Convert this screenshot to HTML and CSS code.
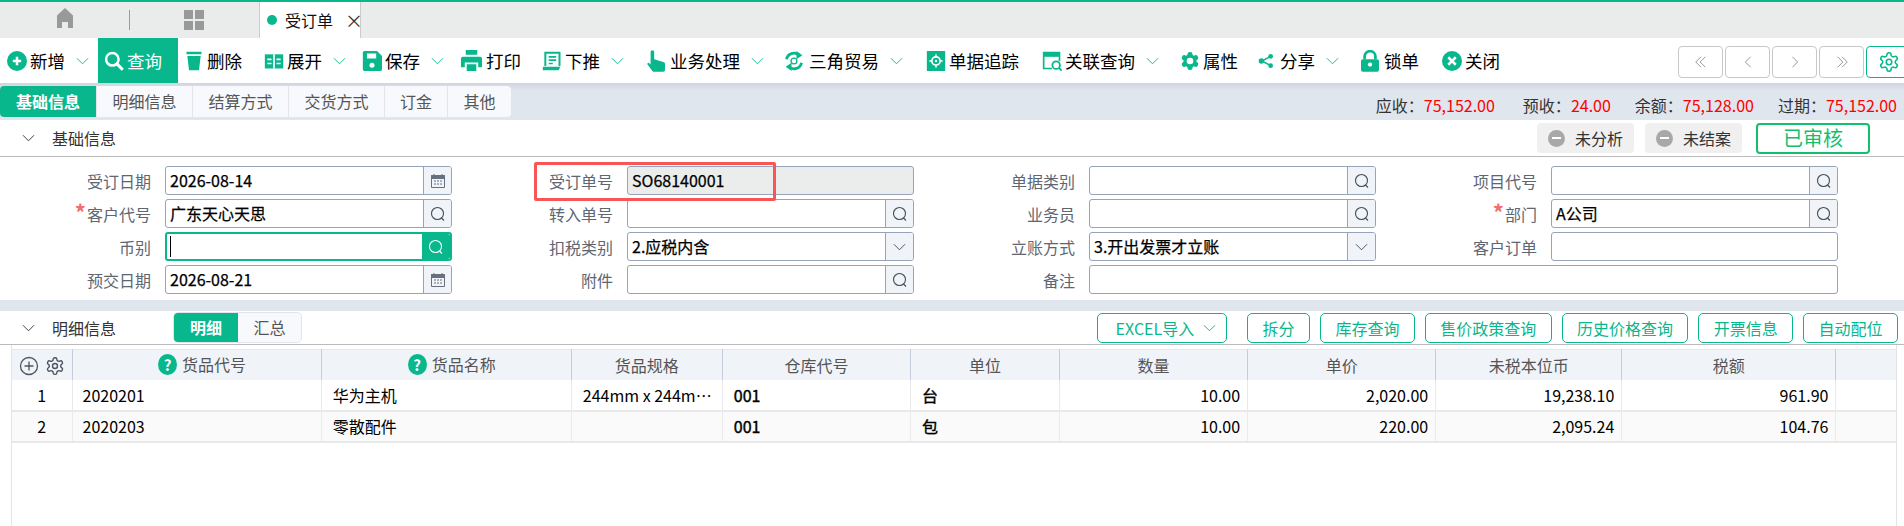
FILE: index.html
```html
<!DOCTYPE html>
<html lang="zh-CN">
<head>
    <meta charset="UTF-8">
    <title>受订单</title>
    <link rel="stylesheet" href="styles.css">
</head>
<body>
    <!-- 图标 -->
    <svg class="sprite" xmlns="http://www.w3.org/2000/svg">
        <symbol id="i-chev" viewBox="0 0 14 8"><path d="M1 1l6 6 6-6" fill="none" stroke="currentColor" stroke-width="1"/></symbol>
        <symbol id="i-add" viewBox="0 0 24 24"><circle cx="12" cy="12" r="12" fill="#09b78c"/><path d="M12 7v10M7 12h10" stroke="#fff" stroke-width="3"/></symbol>
        <symbol id="i-find" viewBox="0 0 24 24"><circle cx="10" cy="10" r="7.5" fill="none" stroke="#fff" stroke-width="3"/><path d="M15.5 15.5l7 7" stroke="#fff" stroke-width="3.6"/></symbol>
        <symbol id="i-trash" viewBox="0 0 24 24"><path d="M3 1h18v3H3zM4 6h16l-2 17H6z" fill="#09b78c"/></symbol>
        <symbol id="i-book" viewBox="0 0 24 24"><path d="M1 4h22v17H1z" fill="#09b78c"/><path d="M12 4v17M4 10h5M15 10h5M4 15h5M15 15h5" stroke="#fff" stroke-width="2"/></symbol>
        <symbol id="i-save" viewBox="0 0 24 24"><path d="M3 0h15l6 6v16a2 2 0 0 1-2 2H3a2 2 0 0 1-2-2V2a2 2 0 0 1 2-2z" fill="#09b78c"/><path d="M6 3h11v6H6z" fill="#fff"/><circle cx="12" cy="17" r="3" fill="#fff"/></symbol>
        <symbol id="i-print" viewBox="0 0 24 24"><path d="M6 1h12v5H6zM3 8h18a2 2 0 0 1 2 2v9h-4v-5H5v5H1v-9a2 2 0 0 1 2-2zM7 16h10v7H7z" fill="#09b78c"/></symbol>
        <symbol id="i-push" viewBox="0 0 24 24"><path d="M4 18V2h17v16" fill="none" stroke="#09b78c" stroke-width="2.4"/><path d="M8 7h9M8 11h9M8 15h5" stroke="#09b78c" stroke-width="2"/><path d="M1 19h21l-2 4H1z" fill="#09b78c"/></symbol>
        <symbol id="i-hand" viewBox="2 0 20 24"><path d="M8 0a2 2 0 0 1 2 2v8l10 3a2 2 0 0 1 2 2v7a2 2 0 0 1-2 2H10a2 2 0 0 1-2-1l-6-8 2-1 2 2V2a2 2 0 0 1 2-2z" fill="#09b78c"/></symbol>
        <symbol id="i-swap" viewBox="0 0 24 24"><path d="M3 10a9 9 0 0 1 15-5M21 14a9 9 0 0 1-15 5" fill="none" stroke="#09b78c" stroke-width="3.4"/><path d="M15 0l7 5-7 5zM9 14l-7 5 7 5z" fill="#09b78c"/><circle cx="12" cy="12" r="3.5" fill="none" stroke="#09b78c" stroke-width="1.6"/></symbol>
        <symbol id="i-track" viewBox="0 0 24 24"><path d="M1 0h22v24H1z" fill="#09b78c"/><circle cx="12" cy="12" r="5" fill="none" stroke="#fff" stroke-width="2"/><circle cx="12" cy="12" r="1.5" fill="#fff"/><path d="M12 4v3M12 17v3M4 12h3M17 12h3" stroke="#fff" stroke-width="1.6"/></symbol>
        <symbol id="i-link" viewBox="0 0 24 24"><path d="M12 21H2V2h19v10" fill="none" stroke="#09b78c" stroke-width="2"/><path d="M2 2h19v5H2z" fill="#09b78c"/><circle cx="17" cy="17" r="4.5" fill="none" stroke="#09b78c" stroke-width="2.2"/><path d="M20 20l3.5 3.5" stroke="#09b78c" stroke-width="2.2"/></symbol>
        <symbol id="i-gear" viewBox="0 0 24 24"><path d="M12.22 2h-.44a2 2 0 0 0-2 2v.18a2 2 0 0 1-1 1.73l-.43.25a2 2 0 0 1-2 0l-.15-.08a2 2 0 0 0-2.73.73l-.22.38a2 2 0 0 0 .73 2.73l.15.1a2 2 0 0 1 1 1.72v.51a2 2 0 0 1-1 1.74l-.15.09a2 2 0 0 0-.73 2.73l.22.38a2 2 0 0 0 2.73.73l.15-.08a2 2 0 0 1 2 0l.43.25a2 2 0 0 1 1 1.73V20a2 2 0 0 0 2 2h.44a2 2 0 0 0 2-2v-.18a2 2 0 0 1 1-1.73l.43-.25a2 2 0 0 1 2 0l.15.08a2 2 0 0 0 2.73-.73l.22-.39a2 2 0 0 0-.73-2.73l-.15-.08a2 2 0 0 1-1-1.74v-.5a2 2 0 0 1 1-1.74l.15-.09a2 2 0 0 0 .73-2.73l-.22-.38a2 2 0 0 0-2.73-.73l-.15.08a2 2 0 0 1-2 0l-.43-.25a2 2 0 0 1-1-1.73V4a2 2 0 0 0-2-2z" fill="none" stroke="currentColor" stroke-width="1.7"/><circle cx="12" cy="12" r="3" fill="none" stroke="currentColor" stroke-width="1.7"/></symbol>
        <symbol id="i-prop" viewBox="0 0 24 24"><path d="M12.22 2h-.44a2 2 0 0 0-2 2v.18a2 2 0 0 1-1 1.73l-.43.25a2 2 0 0 1-2 0l-.15-.08a2 2 0 0 0-2.73.73l-.22.38a2 2 0 0 0 .73 2.73l.15.1a2 2 0 0 1 1 1.72v.51a2 2 0 0 1-1 1.74l-.15.09a2 2 0 0 0-.73 2.73l.22.38a2 2 0 0 0 2.73.73l.15-.08a2 2 0 0 1 2 0l.43.25a2 2 0 0 1 1 1.73V20a2 2 0 0 0 2 2h.44a2 2 0 0 0 2-2v-.18a2 2 0 0 1 1-1.73l.43-.25a2 2 0 0 1 2 0l.15.08a2 2 0 0 0 2.73-.73l.22-.39a2 2 0 0 0-.73-2.73l-.15-.08a2 2 0 0 1-1-1.74v-.5a2 2 0 0 1 1-1.74l.15-.09a2 2 0 0 0 .73-2.73l-.22-.38a2 2 0 0 0-2.73-.73l-.15.08a2 2 0 0 1-2 0l-.43-.25a2 2 0 0 1-1-1.73V4a2 2 0 0 0-2-2z" fill="#09b78c" stroke="#09b78c" stroke-width="1.7"/><circle cx="12" cy="12" r="4" fill="#fff"/></symbol>
        <symbol id="i-share" viewBox="0 0 24 24"><path d="M6 12l13-7M6 12l13 7" stroke="#09b78c" stroke-width="2.2"/><circle cx="5" cy="12" r="4" fill="#09b78c"/><circle cx="19" cy="5" r="3.5" fill="#09b78c"/><circle cx="19" cy="19" r="3.5" fill="#09b78c"/></symbol>
        <symbol id="i-lock" viewBox="2 0 20 24"><path d="M6 10V7a6 6 0 0 1 12 0v3" fill="none" stroke="#09b78c" stroke-width="3"/><path d="M4 10h16a2 2 0 0 1 2 2v10a2 2 0 0 1-2 2H4a2 2 0 0 1-2-2V12a2 2 0 0 1 2-2z" fill="#09b78c"/><circle cx="12" cy="16" r="2.4" fill="#fff"/></symbol>
        <symbol id="i-close" viewBox="0 0 24 24"><circle cx="12" cy="12" r="12" fill="#09b78c"/><path d="M7.500 7.500l9 9M16.500 7.500l-9 9" stroke="#fff" stroke-width="3"/></symbol>
        <symbol id="i-cal" viewBox="0 0 16 16"><path d="M1.500 2.500h13v12h-13z" fill="none" stroke="#66707e"/><path d="M1.500 2.500h13v3h-13zM4 1v2M12 1v2" fill="#66707e" stroke="#66707e"/><path d="M4 8h2M7 8h2M10 8h2M4 11h2M7 11h2M10 11h2" stroke="#66707e"/></symbol>
        <symbol id="i-mag" viewBox="0 0 16 16"><circle cx="7.500" cy="7.500" r="6" fill="none" stroke="currentColor" stroke-width="1.100"/><path d="M11.500 12l2.500 2.500" stroke="currentColor" stroke-width="1.100"/></symbol>
    </svg>

    <!-- 页签栏 -->
    <div class="tabbar">
        <div class="tab-icon">
            <svg class="tab-svg" viewBox="0 0 20 20"><path d="M10 0l8 7.500V20h-5v-6H7v6H2V7.500z" fill="#999"/></svg>
        </div>
        <div class="tab-icon tab-divided">
            <svg class="tab-svg" viewBox="0 0 20 20"><path d="M0 0h9v9H0zM11 0h9v9h-9zM0 11h9v9H0zM11 11h9v9h-9z" fill="#999"/></svg>
        </div>
        <div class="tab-active">
            <span class="tab-dot"></span>
            <span class="tab-name">受订单</span>
            <span class="tab-close">×</span>
        </div>
    </div>

    <!-- 工具栏 -->
    <div class="toolbar">
        <div class="tools">
            <div class="tool tool-first"><svg class="ico"><use href="#i-add"/></svg>新增<svg class="chev"><use href="#i-chev"/></svg></div>
            <div class="tool tool-on"><svg class="ico"><use href="#i-find"/></svg>查询</div>
            <div class="tool"><svg class="ico"><use href="#i-trash"/></svg>删除</div>
            <div class="tool tool-tight"><svg class="ico"><use href="#i-book"/></svg>展开<svg class="chev"><use href="#i-chev"/></svg></div>
            <div class="tool tool-tight"><svg class="ico"><use href="#i-save"/></svg>保存<svg class="chev"><use href="#i-chev"/></svg></div>
            <div class="tool tool-near"><svg class="ico ico-print"><use href="#i-print"/></svg>打印</div>
            <div class="tool tool-far"><svg class="ico"><use href="#i-push"/></svg>下推<svg class="chev"><use href="#i-chev"/></svg></div>
            <div class="tool tool-less"><svg class="ico ico-hand"><use href="#i-hand"/></svg>业务处理<svg class="chev"><use href="#i-chev"/></svg></div>
            <div class="tool tool-far"><svg class="ico ico-swap"><use href="#i-swap"/></svg>三角贸易<svg class="chev"><use href="#i-chev"/></svg></div>
            <div class="tool tool-far"><svg class="ico"><use href="#i-track"/></svg>单据追踪</div>
            <div class="tool tool-near"><svg class="ico"><use href="#i-link"/></svg>关联查询<svg class="chev"><use href="#i-chev"/></svg></div>
            <div class="tool tool-less"><svg class="ico"><use href="#i-prop"/></svg>属性</div>
            <div class="tool"><svg class="ico ico-share"><use href="#i-share"/></svg>分享<svg class="chev"><use href="#i-chev"/></svg></div>
            <div class="tool tool-far"><svg class="ico ico-lock"><use href="#i-lock"/></svg>锁单</div>
            <div class="tool"><svg class="ico"><use href="#i-close"/></svg>关闭</div>
        </div>
        <div class="pager">
            <div class="page-btn"><svg viewBox="0 0 16 16" class="page-ico"><path d="M8 2L2 8l6 6M13 2L7 8l6 6" fill="none" stroke="currentColor"/></svg></div>
            <div class="page-btn"><svg viewBox="0 0 16 16" class="page-ico"><path d="M11 2L5 8l6 6" fill="none" stroke="currentColor"/></svg></div>
            <div class="page-btn"><svg viewBox="0 0 16 16" class="page-ico"><path d="M5 2l6 6-6 6" fill="none" stroke="currentColor"/></svg></div>
            <div class="page-btn"><svg viewBox="0 0 16 16" class="page-ico"><path d="M3 2l6 6-6 6M8 2l6 6-6 6" fill="none" stroke="currentColor"/></svg></div>
            <div class="page-btn page-set"><svg class="page-gear"><use href="#i-gear"/></svg></div>
        </div>
    </div>

    <!-- 单据页签和金额 -->
    <div class="strip">
        <div class="subtabs">
            <div class="subtab subtab-on">基础信息</div>
            <div class="subtab">明细信息</div>
            <div class="subtab">结算方式</div>
            <div class="subtab">交货方式</div>
            <div class="subtab subtab-short">订金</div>
            <div class="subtab subtab-short">其他</div>
        </div>
        <div class="totals">
            <span class="total">应收：<b>75,152.00</b></span>
            <span class="total">预收：<b>24.00</b></span>
            <span class="total">余额：<b>75,128.00</b></span>
            <span class="total">过期：<b>75,152.00</b></span>
        </div>
    </div>

    <!-- 基础信息 -->
    <div class="section-head">
        <svg class="fold"><use href="#i-chev"/></svg>
        <span class="section-title">基础信息</span>
        <div class="statuses">
            <div class="pill"><span class="pill-minus"></span>未分析</div>
            <div class="pill"><span class="pill-minus"></span>未结案</div>
            <div class="audited">已审核</div>
        </div>
    </div>

    <div class="form">
        <label class="lbl">受订日期</label>
        <div class="inp"><span class="val">2026-08-14</span><span class="addon"><svg class="add-ico"><use href="#i-cal"/></svg></span></div>
        <label class="lbl">受订单号</label>
        <div class="inp inp-ro"><span class="val">SO68140001</span></div>
        <label class="lbl">单据类别</label>
        <div class="inp"><span class="val"></span><span class="addon"><svg class="add-ico"><use href="#i-mag"/></svg></span></div>
        <label class="lbl">项目代号</label>
        <div class="inp"><span class="val"></span><span class="addon"><svg class="add-ico"><use href="#i-mag"/></svg></span></div>

        <label class="lbl"><i class="req">*</i>客户代号</label>
        <div class="inp"><span class="val">广东天心天思</span><span class="addon"><svg class="add-ico"><use href="#i-mag"/></svg></span></div>
        <label class="lbl">转入单号</label>
        <div class="inp"><span class="val"></span><span class="addon"><svg class="add-ico"><use href="#i-mag"/></svg></span></div>
        <label class="lbl">业务员</label>
        <div class="inp"><span class="val"></span><span class="addon"><svg class="add-ico"><use href="#i-mag"/></svg></span></div>
        <label class="lbl"><i class="req">*</i>部门</label>
        <div class="inp"><span class="val">A公司</span><span class="addon"><svg class="add-ico"><use href="#i-mag"/></svg></span></div>

        <label class="lbl">币别</label>
        <div class="inp inp-focus"><span class="val"><span class="caret"></span></span><span class="addon"><svg class="add-ico"><use href="#i-mag"/></svg></span></div>
        <label class="lbl">扣税类别</label>
        <div class="inp"><span class="val">2.应税内含</span><span class="addon"><svg class="add-chev"><use href="#i-chev"/></svg></span></div>
        <label class="lbl">立账方式</label>
        <div class="inp"><span class="val">3.开出发票才立账</span><span class="addon"><svg class="add-chev"><use href="#i-chev"/></svg></span></div>
        <label class="lbl">客户订单</label>
        <div class="inp"><span class="val"></span></div>

        <label class="lbl">预交日期</label>
        <div class="inp"><span class="val">2026-08-21</span><span class="addon"><svg class="add-ico"><use href="#i-cal"/></svg></span></div>
        <label class="lbl">附件</label>
        <div class="inp"><span class="val"></span><span class="addon"><svg class="add-ico"><use href="#i-mag"/></svg></span></div>
        <label class="lbl">备注</label>
        <div class="inp inp-long"><span class="val"></span></div>

        <!-- 标注框 -->
        <div class="mark"></div>
    </div>

    <div class="band"></div>

    <!-- 明细信息 -->
    <div class="detail-head">
        <svg class="fold"><use href="#i-chev"/></svg>
        <span class="section-title">明细信息</span>
        <div class="switch">
            <div class="switch-item switch-on">明细</div>
            <div class="switch-item">汇总</div>
        </div>
        <div class="actions">
            <div class="act act-excel">EXCEL导入<svg class="chev chev-excel"><use href="#i-chev"/></svg></div>
            <div class="act">拆分</div>
            <div class="act">库存查询</div>
            <div class="act">售价政策查询</div>
            <div class="act">历史价格查询</div>
            <div class="act">开票信息</div>
            <div class="act">自动配位</div>
        </div>
    </div>

    <div class="grid-wrap">
        <table class="grid">
            <colgroup>
                <col class="c-no"><col class="c-code"><col class="c-name"><col class="c-spec"><col class="c-wh"><col class="c-unit">
                <col class="c-num"><col class="c-num"><col class="c-cny"><col class="c-tax"><col class="c-end">
            </colgroup>
            <thead>
                <tr>
                    <th class="th-tools">
                        <svg class="th-ico" viewBox="0 0 20 20"><circle cx="10" cy="10" r="8.500" fill="none" stroke="#4d5560" stroke-width="1.300"/><path d="M10 5.500v9M5.500 10h9" stroke="#4d5560" stroke-width="1.300"/></svg>
                        <svg class="th-ico th-gear"><use href="#i-gear"/></svg>
                    </th>
                    <th class="th-help"><span class="help">?</span>货品代号</th>
                    <th class="th-help"><span class="help">?</span>货品名称</th>
                    <th>货品规格</th>
                    <th>仓库代号</th>
                    <th>单位</th>
                    <th>数量</th>
                    <th>单价</th>
                    <th>未税本位币</th>
                    <th>税额</th>
                    <th></th>
                </tr>
            </thead>
            <tbody>
                <tr>
                    <td class="no">1</td><td class="code">2020201</td><td>华为主机</td><td class="spec">244mm x 244m…</td><td class="strong">001</td><td class="strong">台</td>
                    <td class="num">10.00</td><td class="num">2,020.00</td><td class="num">19,238.10</td><td class="num">961.90</td><td></td>
                </tr>
                <tr class="alt">
                    <td class="no">2</td><td class="code">2020203</td><td>零散配件</td><td class="spec"></td><td class="strong">001</td><td class="strong">包</td>
                    <td class="num">10.00</td><td class="num">220.00</td><td class="num">2,095.24</td><td class="num">104.76</td><td></td>
                </tr>
            </tbody>
        </table>
    </div>
</body>
</html>
```

FILE: styles.css
```css
* {
    box-sizing: border-box;
}

html, body {
    height: 100%;
}

body {
    margin: 0;
    display: flex;
    flex-direction: column;
    overflow: hidden;
    background: #ffffff;
    color: #111;
    font-family: "Noto Sans CJK SC", "Noto Sans", sans-serif;
    font-size: 16px;
}

.sprite {
    display: none;
}

/* 页签栏 */
.tabbar {
    display: flex;
    flex: none;
    height: 38px;
    padding-top: 2px;
    border-top: 2px solid #09b78c;
    background: #e9eceb;
}

.tab-icon {
    display: flex;
    align-items: center;
    justify-content: center;
    width: 129px;
    height: 27px;
}

.tab-divided {
    width: 130px;
    height: 20px;
    margin-top: 6px;
    padding-right: 2px;
    border-left: 1px solid #9a9a9a;
}

.tab-svg {
    width: 20px;
    height: 20px;
}

.tab-active {
    display: flex;
    align-items: center;
    width: 102px;
    height: 36px;
    margin-top: -2px;
    padding-left: 7px;
    background: #fff;
    border-left: 1px solid #c9cccb;
    border-right: 1px solid #c9cccb;
    white-space: nowrap;
}

.tab-dot {
    flex: none;
    width: 10px;
    height: 10px;
    border-radius: 50%;
    background: #09b78c;
}

.tab-name {
    flex: none;
    margin-left: 8px;
    line-height: 20px;
}

.tab-close {
    flex: none;
    margin-left: 12px;
    font-size: 18px;
    line-height: 20px;
    color: #333;
}

/* 工具栏 */
.toolbar {
    display: flex;
    flex: none;
    height: 45px;
    background: #fff;
}

.tools {
    display: flex;
    flex: 1;
    padding-left: 7px;
}

.tool {
    display: flex;
    align-items: center;
    flex: none;
    height: 45px;
    margin-right: 22px;
    font-size: 17.5px;
    color: #000;
}

.tool-first {
    margin-right: 9px;
}

.tool-on {
    width: 80px;
    margin-right: 6px;
    padding-left: 6px;
    background: #09b78c;
    color: #fff;
}

.tool-tight {
    margin-right: 16px;
}

.tool-far {
    margin-right: 23px;
}

.tool-near {
    margin-right: 21px;
}

.tool-less {
    margin-right: 20px;
}

.ico {
    width: 20px;
    height: 20px;
    margin-right: 3px;
}

.ico-print {
    width: 23px;
    height: 23px;
}

.ico-hand {
    width: 18px;
    height: 22px;
    margin-right: 5px;
}

.ico-swap {
    margin-right: 5px;
}

.ico-share {
    width: 16px;
    margin-right: 6px;
}

.ico-lock {
    width: 18px;
    height: 22px;
    margin-right: 5px;
}

.chev {
    width: 13px;
    height: 8px;
    margin-left: 11px;
    color: #09b78c;
}

.pager {
    display: flex;
    flex: none;
    gap: 2px;
    width: 226px;
    padding-top: 8px;
    overflow: hidden;
}

.page-btn {
    display: flex;
    align-items: center;
    justify-content: center;
    flex: none;
    width: 45px;
    height: 32px;
    border: 1px solid #c8c8c8;
    border-radius: 4px;
    color: #888;
}

.page-set {
    border-color: #09b78c;
    color: #09b78c;
}

.page-ico {
    width: 14px;
    height: 14px;
}

.page-gear {
    width: 22px;
    height: 22px;
}

/* 单据页签 */
.strip {
    display: flex;
    flex: none;
    justify-content: space-between;
    height: 37px;
    padding-top: 3px;
    background: linear-gradient(#d0d4de, #e0e6ee 8px);
}

.subtabs {
    display: flex;
    height: 31px;
    border-radius: 4px;
    background: #f7f9fc;
    overflow: hidden;
}

.subtab {
    width: 96px;
    border-right: 1px solid #e2e6ec;
    text-align: center;
    line-height: 30px;
    color: #555;
}

.subtab-on {
    width: 97px;
    background: #09b78c;
    color: #fff;
    font-weight: 700;
}

.subtab-short {
    width: 63px;
}

.subtab-short:last-child {
    border-right: 0;
}

.totals {
    display: flex;
    gap: 24px;
    padding-right: 7px;
    line-height: 38px;
    font-size: 16px;
}

.total {
    color: #333;
}

.total:first-child {
    margin-right: 4px;
}

.total b {
    color: #f00;
    font-weight: 400;
}

/* 基础信息 */
.section-head {
    display: flex;
    flex: none;
    align-items: center;
    height: 37px;
    border-bottom: 1px solid #bbb;
}

.fold {
    width: 13px;
    height: 8px;
    margin: 0 17px 0 22px;
    color: #333;
}

.section-title {
    color: #333;
}

.statuses {
    display: flex;
    align-items: center;
    margin-left: auto;
    padding-right: 34px;
}

.pill {
    display: flex;
    align-items: center;
    height: 30px;
    margin-right: 11px;
    padding: 0 11px;
    border-radius: 4px;
    background: #f0f0f0;
    color: #333;
}

.pill-minus {
    display: flex;
    align-items: center;
    justify-content: center;
    width: 17px;
    height: 17px;
    margin-right: 10px;
    border-radius: 50%;
    background: #a8a8a8;
}

.pill-minus::before {
    content: "";
    width: 9px;
    height: 2px;
    background: #fff;
}

.audited {
    width: 114px;
    height: 31px;
    margin-left: 3px;
    border: 2px solid #12bf6d;
    border-radius: 4px;
    text-align: center;
    line-height: 26px;
    font-size: 20px;
    color: #12bf6d;
}

.form {
    position: relative;
    display: grid;
    flex: none;
    grid-template-columns: 151px 287px 147px 287px 147px 287px 147px 287px;
    grid-auto-rows: 29px;
    column-gap: 14px;
    row-gap: 4px;
    height: 143px;
    padding-top: 9px;
}

.lbl {
    text-align: right;
    line-height: 31px;
    color: #5e6672;
}

.req {
    margin-right: 1px;
    font-style: normal;
    font-weight: 700;
    font-size: 22px;
    line-height: 18px;
    color: #f56c6c;
}

.inp {
    display: flex;
    border: 1px solid #97a3b8;
    border-radius: 3px;
    background: #fff;
}

.inp-ro {
    background: #ebedec;
}

.inp-long {
    grid-column: span 3;
}

.val {
    flex: 1;
    padding-left: 4px;
    line-height: 26px;
    color: #000;
    -webkit-text-stroke: 0.25px #000;
}

.addon {
    display: flex;
    align-items: center;
    justify-content: center;
    flex: none;
    width: 28px;
    border-left: 1px solid #97a3b8;
    border-radius: 0 2px 2px 0;
    background: #f0f3f8;
    color: #444c58;
}

.add-ico {
    width: 16px;
    height: 16px;
}

.add-chev {
    width: 13px;
    height: 8px;
}

.inp-focus {
    border: 2px solid #09b78c;
}

.inp-focus .addon {
    border-left: 0;
    background: #09b78c;
    color: #fff;
}

.inp-focus .val {
    display: flex;
    align-items: center;
    padding-left: 3px;
}

.caret {
    width: 1px;
    height: 21px;
    background: #000;
}

.mark {
    position: absolute;
    left: 534px;
    top: 5px;
    width: 242px;
    height: 39px;
    border: 3px solid #f85656;
    border-radius: 2px;
}

.band {
    flex: none;
    height: 11px;
    background: #e0e6ee;
}

/* 明细信息 */
.detail-head {
    display: flex;
    flex: none;
    align-items: center;
    height: 34px;
    border-bottom: 1px solid #bbb;
}

.switch {
    display: flex;
    height: 31px;
    margin-left: 57px;
    border: 1px solid #e2e6ec;
    border-radius: 5px;
    background: #f7f9fc;
    overflow: hidden;
}

.switch-item {
    width: 63px;
    text-align: center;
    line-height: 28px;
    color: #555;
}

.switch-on {
    width: 64px;
    background: #09b78c;
    color: #fff;
    font-weight: 700;
}

.actions {
    display: flex;
    gap: 10px;
    margin-left: auto;
    padding-right: 6px;
}

.act {
    display: flex;
    align-items: center;
    height: 30px;
    padding: 0 14.4px;
    border: 1px solid #09b78c;
    border-radius: 5px;
    color: #09b78c;
    white-space: nowrap;
}

.act-excel {
    margin-right: 10px;
    padding: 0 10px 0 18px;
}

.chev-excel {
    margin-left: 9px;
}

/* 明细表格 */
.grid-wrap {
    flex: 1;
    margin: 0 7px 0 11px;
    padding-top: 4px;
    border-left: 1px solid #e4e4e4;
    border-right: 1px solid #e4e4e4;
}

.grid {
    width: 100%;
    table-layout: fixed;
    border-collapse: collapse;
}

.c-no { width: 60px; }
.c-code { width: 249px; }
.c-name { width: 250px; }
.c-spec { width: 151px; }
.c-wh { width: 188px; }
.c-unit { width: 149px; }
.c-num { width: 188px; }
.c-cny { width: 186px; }
.c-tax { width: 214px; }
.c-end { width: 60px; }

.grid th {
    height: 30px;
    padding: 0;
    border-right: 1px solid #c5cddb;
    border-top: 1px solid #e4e8ee;
    background: #f0f3f8;
    font-weight: 400;
    color: #555;
    line-height: 20px;
}

.grid td {
    height: 31px;
    padding: 0 11px;
    border-right: 1px solid #e8eaee;
    border-bottom: 2px solid #e8e8e8;
    color: #000;
    white-space: nowrap;
}

.grid th:last-child, .grid td:last-child {
    border-right: 0;
}

.alt td {
    background: #fafafa;
}

.grid .no {
    text-align: center;
    padding: 0;
}

.grid .code {
    padding-left: 10px;
}

.grid .strong {
    -webkit-text-stroke: 0.4px #000;
}

.grid .num {
    text-align: right;
    padding-right: 7px;
}

.th-tools {
    white-space: nowrap;
}

.th-ico {
    width: 20px;
    height: 20px;
    vertical-align: middle;
}

.th-gear {
    margin-left: 2px;
    color: #4d5560;
}

.grid .th-help {
    padding-left: 11px;
}

.help {
    display: inline-block;
    width: 19px;
    height: 21px;
    margin-right: 5px;
    border-radius: 50%;
    background: #09b78c;
    text-align: center;
    line-height: 21px;
    font-size: 15px;
    font-weight: 700;
    color: #fff;
}
```
